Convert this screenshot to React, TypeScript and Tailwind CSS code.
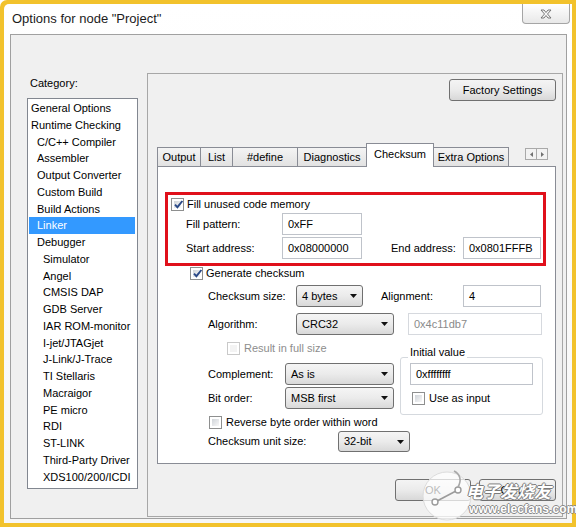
import React from 'react'

const categories: [string, number][] = [
  ['General Options', 0],
  ['Runtime Checking', 0],
  ['C/C++ Compiler', 1],
  ['Assembler', 1],
  ['Output Converter', 1],
  ['Custom Build', 1],
  ['Build Actions', 1],
  ['Linker', 1],
  ['Debugger', 1],
  ['Simulator', 2],
  ['Angel', 2],
  ['CMSIS DAP', 2],
  ['GDB Server', 2],
  ['IAR ROM-monitor', 2],
  ['I-jet/JTAGjet', 2],
  ['J-Link/J-Trace', 2],
  ['TI Stellaris', 2],
  ['Macraigor', 2],
  ['PE micro', 2],
  ['RDI', 2],
  ['ST-LINK', 2],
  ['Third-Party Driver', 2],
  ['XDS100/200/ICDI', 2],
]

const indent = ['pl-[2px]', 'pl-[8px]', 'pl-[14px]']

function Check({ checked = false, disabled = false }: { checked?: boolean; disabled?: boolean }) {
  return (
    <span
      className={`relative flex w-[13px] h-[13px] shrink-0 border p-[2px] bg-white ${
        disabled ? 'border-[#c9c9c9]' : 'border-[#8e8f8f]'
      }`}
    >
      <span className={`flex-1 ${disabled ? 'bg-[#f3f3f3]' : 'bg-linear-to-br from-[#d0d4d9] to-[#f8f8f8]'}`} />
      {checked && (
        <svg className="absolute left-[1px] top-[0px]" width="11" height="11" viewBox="0 0 11 11">
          <path d="M2 5.6 L4.4 8.2 L9.4 2" fill="none" stroke="#2b4987" strokeWidth="1.9" />
        </svg>
      )}
    </span>
  )
}

function Combo({ value, className }: { value: string; className: string }) {
  return (
    <div
      className={`flex items-center justify-between self-stretch rounded-[3px] border border-[#707070] bg-linear-to-b from-[#f5f5f5] via-[#ebebeb] to-[#d9d9d9] pl-[5px] pr-[5px] ${className}`}
    >
      <span>{value}</span>
      <svg width="7" height="4" viewBox="0 0 7 4">
        <path d="M0 0h7L3.5 4z" fill="#111" />
      </svg>
    </div>
  )
}

function Field({ value, className, muted = false }: { value: string; className: string; muted?: boolean }) {
  return (
    <div
      className={`flex items-center self-stretch border bg-white pl-[5px] ${
        muted ? 'border-[#d6d9de] text-[#8a8a8a]' : 'border-[#bfc3ca]'
      } ${className}`}
    >
      {value}
    </div>
  )
}

function Tab({ label, className, active = false }: { label: string; className: string; active?: boolean }) {
  if (active) {
    return (
      <div
        className={`relative z-10 -ml-px -mb-px h-[24px] flex items-center justify-center pb-[2px] border border-b-0 border-[#898c95] bg-white ${className}`}
      >
        {label}
      </div>
    )
  }
  return (
    <div
      className={`-ml-px first:ml-0 h-[19px] flex items-center justify-center border border-b-0 border-[#898c95] bg-linear-to-b from-[#f4f4f4] to-[#e2e2e2] ${className}`}
    >
      {label}
    </div>
  )
}

function Button({ label, className }: { label: string; className: string }) {
  return (
    <div
      className={`flex items-center justify-center h-[22px] rounded-[3px] border border-[#707070] bg-linear-to-b from-[#f4f4f4] via-[#ebebeb] to-[#d8d8d8] ${className}`}
    >
      {label}
    </div>
  )
}

export default function App() {
  return (
    <div className="relative w-[576px] h-[527px] overflow-hidden bg-[#f2c22c] p-[4px] rounded-tl-[7px] font-['Liberation_Sans',Arial,sans-serif] text-[11px] leading-[13px] text-black">
      <div className="flex flex-col w-[568px] h-[519px] rounded-tl-[5px] bg-linear-to-b from-white to-[#f6f6f6]">
        {/* title bar */}
        <div className="flex justify-between items-start h-[30px] shrink-0">
          <div className="pl-[8px] pt-[7px] text-[13px] leading-[15px] text-[#1b1b1b]">Options for node "Project"</div>
          <div className="flex items-center justify-center w-[48px] h-[20px] mr-[2px] border border-t-0 border-[#a5a5a5] rounded-b-[4px] bg-linear-to-b from-white to-[#e8e8e8]">
            <svg width="12" height="10" viewBox="0 0 12 10">
              <path
                d="M1 1h3l2 2.5l2-2.5h3l-3.5 4l3.5 4h-3l-2-2.5l-2 2.5h-3l3.5-4z"
                fill="#f7f7f7"
                stroke="#6b6b6b"
                strokeWidth="0.9"
                strokeLinejoin="round"
              />
            </svg>
          </div>
        </div>

        {/* client area */}
        <div className="flex ml-[6px] w-[557px] h-[485px] border border-[#a0a0a0] bg-[#f0f0f0]">
          <div className="pl-[16px] pt-[41px] shrink-0">
            <div className="pl-[3px] leading-[14px]">Category:</div>
            <div className="mt-[8px] w-[111px] h-[391px] border border-[#828790] bg-white px-[1px] pt-[1px]">
              {categories.map(([name, level]) => (
                <div
                  key={name}
                  className={`h-[16.75px] leading-[16.75px] mr-[1px] whitespace-nowrap ${indent[level]} ${
                    name === 'Linker' ? 'bg-[#3399ff] text-white' : ''
                  }`}
                >
                  {name}
                </div>
              ))}
            </div>
          </div>

          <div className="flex flex-col ml-[9px] mt-[38px] w-[416px] h-[444px] border border-[#a7a7a7]">
            <div className="flex justify-end pt-[5px] pr-[6px]">
              <Button label="Factory Settings" className="w-[107px]" />
            </div>

            {/* tabs */}
            <div className="flex items-end mt-[42px] h-[23px] pl-[9px]">
              <Tab label="Output" className="w-[44px]" />
              <Tab label="List" className="w-[33px]" />
              <Tab label="#define" className="w-[66px]" />
              <Tab label="Diagnostics" className="w-[70px]" />
              <Tab label="Checksum" className="w-[68px]" active />
              <Tab label="Extra Options" className="w-[76px]" />
              <div className="flex self-start mt-[5px] ml-[16px]">
                <div className="flex items-center justify-center w-[12px] h-[12px] border border-[#a9a9a9] bg-[#f2f2f2]">
                  <svg width="3" height="5" viewBox="0 0 3 5">
                    <path d="M3 0v5L0 2.5z" fill="#707070" />
                  </svg>
                </div>
                <div className="-ml-px flex items-center justify-center w-[12px] h-[12px] border border-[#a9a9a9] bg-[#f2f2f2]">
                  <svg width="3" height="5" viewBox="0 0 3 5">
                    <path d="M0 0v5L3 2.5z" fill="#707070" />
                  </svg>
                </div>
              </div>
            </div>

            {/* tab page */}
            <div className="flex flex-col ml-[9px] w-[399px] h-[298px] border border-[#898c95] bg-white">
              <div className="flex flex-col ml-[7px] mt-[25px] w-[381px] h-[74px] border-[3px] border-[#e0101b] pt-[3px] pl-[3px]">
                <div className="flex items-center h-[13px]">
                  <Check checked />
                  <span className="ml-[3px]">Fill unused code memory</span>
                </div>
                <div className="flex items-center h-[22px] mt-[2px]">
                  <span className="w-[111px] pl-[15px]">Fill pattern:</span>
                  <Field value="0xFF" className="w-[80px]" />
                </div>
                <div className="flex items-center h-[22px] mt-[2px]">
                  <span className="w-[111px] pl-[15px]">Start address:</span>
                  <Field value="0x08000000" className="w-[80px]" />
                  <span className="ml-[29px] w-[72px]">End address:</span>
                  <Field value="0x0801FFFB" className="w-[78px]" />
                </div>
              </div>

              <div className="flex items-center h-[13px] mt-[1px] ml-[32px]">
                <Check checked />
                <span className="ml-[3px]">Generate checksum</span>
              </div>

              <div className="flex items-center h-[22px] mt-[5px] pl-[50px]">
                <span className="w-[88px]">Checksum size:</span>
                <Combo value="4 bytes" className="w-[67px]" />
                <span className="ml-[18px] w-[82px]">Alignment:</span>
                <Field value="4" className="w-[78px]" />
              </div>

              <div className="flex items-center h-[22px] mt-[6px] pl-[50px]">
                <span className="w-[88px]">Algorithm:</span>
                <Combo value="CRC32" className="w-[98px]" />
                <Field value="0x4c11db7" className="ml-[14px] w-[134px]" muted />
              </div>

              <div className="flex items-center h-[13px] mt-[7px] ml-[69px]">
                <Check disabled />
                <span className="ml-[4px] text-[#8d8d8d]">Result in full size</span>
              </div>

              <div className="flex items-start">
                <div className="flex flex-col pl-[50px]">
                  <div className="flex items-center h-[22px] mt-[8px]">
                    <span className="w-[77px]">Complement:</span>
                    <Combo value="As is" className="w-[109px]" />
                  </div>
                  <div className="flex items-center h-[22px] mt-[2px]">
                    <span className="w-[77px]">Bit order:</span>
                    <Combo value="MSB first" className="w-[109px]" />
                  </div>
                </div>
                <div className="relative flex flex-col ml-[6px] mt-[2px] w-[143px] h-[58px] border border-[#d5d9de] rounded-[3px]">
                  <span className="absolute -top-[13px] left-[7px] px-[2px] bg-white leading-[14px]">Initial value</span>
                  <div className="flex h-[22px] ml-[9px] mt-[5px]">
                    <Field value="0xffffffff" className="w-[123px]" />
                  </div>
                  <div className="flex items-center h-[13px] mt-[7px] ml-[11px]">
                    <Check />
                    <span className="ml-[4px]">Use as input</span>
                  </div>
                </div>
              </div>

              <div className="flex items-center h-[13px] mt-[1px] ml-[51px]">
                <Check />
                <span className="ml-[4px]">Reverse byte order within word</span>
              </div>

              <div className="flex items-center h-[21px] mt-[2px] pl-[50px]">
                <span className="w-[130px]">Checksum unit size:</span>
                <Combo value="32-bit" className="w-[72px]" />
              </div>
            </div>

            <div className="flex justify-end gap-[8px] mt-[15px] pr-[6px]">
              <Button label="OK" className="w-[76px]" />
              <Button label="Cancel" className="w-[77px]" />
            </div>
          </div>
        </div>
      </div>

      {/* watermark */}
      <svg className="absolute left-[418px] top-[468px]" width="60" height="56" viewBox="0 0 60 56">
        <circle cx="29" cy="28" r="24" fill="#ffffff" fillOpacity="0.72" stroke="#dcdcdc" strokeWidth="1" />
        <path d="M19 33 L38 23" stroke="#9b9b9b" strokeWidth="1.6" fill="none" />
        <circle cx="17" cy="34" r="3" fill="white" stroke="#9b9b9b" strokeWidth="1.4" />
        <circle cx="40" cy="22" r="3" fill="white" stroke="#9b9b9b" strokeWidth="1.4" />
        <path d="M40 19 C44 12 42 6 36 3" stroke="#a8a8a8" strokeWidth="1.6" fill="none" />
      </svg>
      <div className="absolute left-[466px] top-[481px] font-['Noto_Sans_CJK_SC',sans-serif] text-[17px] leading-[20px] font-bold italic text-white [text-shadow:1px_0_0_#7a7a7a,-1px_0_0_#7a7a7a,0_1px_0_#7a7a7a,0_-1px_0_#7a7a7a]">
        电子发烧友
      </div>
      <div className="absolute left-[469px] top-[503px] font-['Liberation_Sans',Arial,sans-serif] text-[12px] leading-[12px] tracking-[0.1px] font-bold text-white [text-shadow:1px_0_0_#8a8a8a,-1px_0_0_#8a8a8a,0_1px_0_#8a8a8a,0_-1px_0_#8a8a8a]">
        www.elecfans.com
      </div>
    </div>
  )
}
